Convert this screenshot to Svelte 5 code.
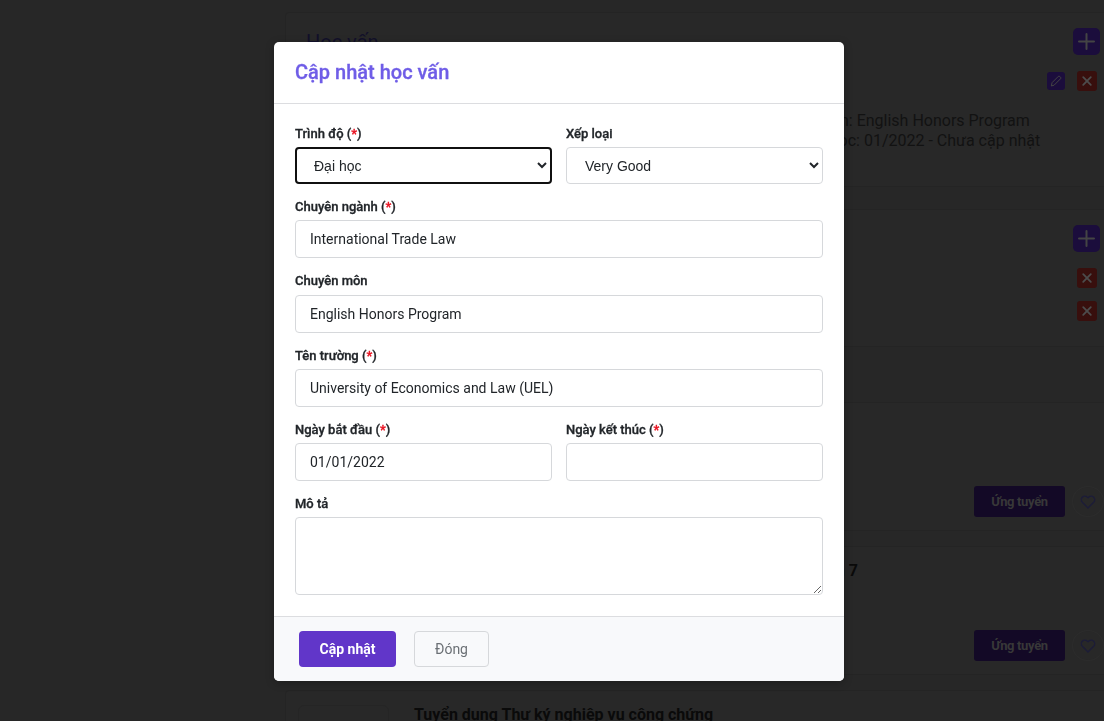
<script lang="ts">
	const ratings = ['Very Good', 'Good', 'Average'];
	const levels = ['Đại học', 'Cao đẳng', 'Thạc sĩ'];
	const jobs = [
		{ title: '', apply: true },
		{ title: 'Tuyển dụng Chuyên viên Pháp chế làm việc tại khu vực Quận 7', apply: true }
	];
</script>

{#snippet plus()}
	<button class="plus" aria-label="Thêm">
		<svg viewBox="0 0 27 27" width="27" height="27"><path d="M13.5 6v15M6 13.5h15" /></svg>
	</button>
{/snippet}

{#snippet remove()}
	<button class="remove" aria-label="Xóa">
		<svg viewBox="0 0 20 20" width="20" height="20"><path d="M6.2 6.2l7.6 7.6M13.8 6.2l-7.6 7.6" /></svg>
	</button>
{/snippet}

{#snippet heart()}
	<button class="heart" aria-label="Yêu thích">
		<svg viewBox="0 0 24 24" width="16" height="16">
			<path d="M12 21 3.5 12.4a5.4 5.4 0 0 1 0-7.6 5.3 5.3 0 0 1 7.5 0l1 1 1-1a5.3 5.3 0 0 1 7.5 0 5.4 5.4 0 0 1 0 7.6z" />
		</svg>
	</button>
{/snippet}

<div class="page">
	<section class="card edu">
		<header class="card-head">
			<h2>Học vấn</h2>
			{@render plus()}
		</header>
		<div class="row-actions">
			<button class="edit" aria-label="Sửa">
				<svg viewBox="0 0 18 18" width="18" height="18">
					<path d="M4.4 13.6l.7-3 6.2-6.2a1 1 0 0 1 1.4 0l.9.9a1 1 0 0 1 0 1.4l-6.2 6.2z" />
				</svg>
			</button>
			{@render remove()}
		</div>
		<div class="edu-info">
			<p>Chuyên môn: English Honors Program</p>
			<p>Thời gian học: 01/2022 - Chưa cập nhật</p>
		</div>
	</section>

	<section class="card skills">
		<header class="card-head">
			<h2>Kỹ năng</h2>
			{@render plus()}
		</header>
		<div class="skill-row">{@render remove()}</div>
		<div class="skill-row">{@render remove()}</div>
	</section>

	<div class="spacer"></div>

	{#each jobs as job}
		<article class="card job">
			<h3>{job.title}</h3>
			<div class="job-actions">
				<button class="apply">Ứng tuyển</button>
				{@render heart()}
			</div>
		</article>
	{/each}

	<article class="card job last">
		<div class="logo"></div>
		<h3>Tuyển dụng Thư ký nghiệp vụ công chứng</h3>
	</article>
</div>

<div class="modal" role="dialog" aria-modal="true">
	<header class="modal-head">
		<h1>Cập nhật học vấn</h1>
	</header>

	<form class="modal-body">
		<div class="cols">
			<div class="field">
				<label for="level">Trình độ (<span class="req">*</span>)</label>
				<select id="level" class="control picker focused">
					{#each levels as level}<option>{level}</option>{/each}
				</select>
			</div>
			<div class="field">
				<label for="rating">Xếp loại</label>
				<select id="rating" class="control picker">
					{#each ratings as rating}<option>{rating}</option>{/each}
				</select>
			</div>
		</div>
		<div class="field">
			<label for="major">Chuyên ngành (<span class="req">*</span>)</label>
			<input id="major" class="control" value="International Trade Law" />
		</div>
		<div class="field">
			<label for="spec">Chuyên môn</label>
			<input id="spec" class="control" value="English Honors Program" />
		</div>
		<div class="field">
			<label for="school">Tên trường (<span class="req">*</span>)</label>
			<input id="school" class="control" value="University of Economics and Law (UEL)" />
		</div>
		<div class="cols">
			<div class="field">
				<label for="start">Ngày bắt đầu (<span class="req">*</span>)</label>
				<input id="start" class="control" value="01/01/2022" />
			</div>
			<div class="field">
				<label for="end">Ngày kết thúc (<span class="req">*</span>)</label>
				<input id="end" class="control" />
			</div>
		</div>
		<div class="field desc">
			<label for="desc">Mô tả</label>
			<textarea id="desc" class="control"></textarea>
		</div>
	</form>

	<footer class="modal-foot">
		<button class="btn primary">Cập nhật</button>
		<button class="btn ghost">Đóng</button>
	</footer>
</div>

<style>
	:global(body) {
		background: #272727;
		overflow: hidden;
		font-family: Roboto, 'Liberation Sans', sans-serif;
	}

	.page {
		height: 721px;
		overflow: hidden;
		padding: 12px 0 0 285px;
		box-sizing: border-box;
		display: flex;
		flex-direction: column;
	}

	.card {
		width: 830px;
		box-sizing: border-box;
		flex-shrink: 0;
		background: #282828;
		border: 1px solid #242424;
		border-radius: 4px;
		position: relative;
		padding: 15px 14px 0 20px;
	}

	.edu {
		height: 175px;
	}

	.skills {
		height: 138px;
		margin-top: 22px;
	}

	.spacer {
		height: 55px;
		flex-shrink: 0;
	}

	.job {
		height: 129px;
		margin-bottom: 15px;
		padding: 14px 0 0 128px;
	}

	.job:not(.last) h3 {
		text-indent: -4px;
	}

	.card-head {
		display: flex;
		justify-content: space-between;
		align-items: flex-start;
	}

	h2 {
		margin: 2px 0 0;
		font-size: 20px;
		font-weight: 400;
		color: #12102a;
		line-height: 24px;
	}

	button {
		border: 0;
		padding: 0;
		display: block;
		font-family: inherit;
	}

	svg path {
		fill: none;
		stroke-linecap: round;
		stroke-linejoin: round;
	}

	.plus {
		width: 27px;
		height: 27px;
		border-radius: 5px;
		background: #1b0d3c;
	}

	.plus path {
		stroke: #444;
		stroke-width: 2;
	}

	.row-actions {
		display: flex;
		justify-content: flex-end;
		align-items: center;
		gap: 12px;
		margin: 16px 3px 0 0;
	}

	.edit {
		width: 18px;
		height: 18px;
		border-radius: 3px;
		background: #1b0d3c;
	}

	.edit path {
		stroke: #444;
		stroke-width: 1;
	}

	.remove {
		width: 20px;
		height: 20px;
		border-radius: 3px;
		background: #380f0d;
	}

	.remove path {
		stroke: #4c4c4c;
		stroke-width: 1.8;
	}

	.edu-info {
		margin: 20px 0 0 454px;
	}

	.edu-info p {
		margin: 0;
		font-size: 16px;
		line-height: 20px;
		color: #121212;
		white-space: nowrap;
	}

	.skill-row {
		display: flex;
		justify-content: flex-end;
		margin: 16px 3px 0 0;
	}

	.skill-row + .skill-row {
		margin-top: 13px;
	}

	h3 {
		margin: 0;
		font-size: 16px;
		font-weight: 700;
		line-height: 20px;
		color: #0a0a0a;
		white-space: nowrap;
	}

	.job-actions {
		position: absolute;
		top: 83px;
		left: 688px;
		display: flex;
		align-items: center;
		gap: 7px;
	}

	.apply {
		width: 91px;
		height: 31px;
		border-radius: 3px;
		background: #130926;
		color: #383838;
		font-size: 13px;
		font-weight: 700;
		letter-spacing: -0.35px;
	}

	.heart {
		width: 32px;
		height: 31px;
		border-radius: 50%;
		border: 1px solid #2c2c2c;
		background: transparent;
		display: flex;
		align-items: center;
		justify-content: center;
		box-sizing: border-box;
	}

	.heart path {
		stroke: #1c1c38;
		stroke-width: 2;
	}

	.logo {
		position: absolute;
		left: 12px;
		top: 14px;
		width: 89px;
		height: 100px;
		border: 1px solid #252525;
		border-radius: 6px;
	}

	.modal {
		position: fixed;
		left: 274px;
		top: 42px;
		width: 570px;
		height: 639px;
		background: #fff;
		border-radius: 5px;
		box-shadow: 0 2px 8px rgba(0, 0, 0, 0.25);
		display: flex;
		flex-direction: column;
		overflow: hidden;
	}

	.modal-head {
		height: 62px;
		flex-shrink: 0;
		box-sizing: border-box;
		border-bottom: 1px solid #dcdde0;
		padding: 0 21px 2px;
		display: flex;
		align-items: center;
	}

	h1 {
		margin: 0;
		font-size: 20px;
		font-weight: 500;
		color: #6f5de7;
		-webkit-text-stroke: 0.3px #6f5de7;
	}

	.modal-body {
		flex: 1;
		padding: 20px 21px 0;
	}

	.cols {
		display: grid;
		grid-template-columns: 257px 257px;
		gap: 14px;
	}

	.field {
		margin-bottom: 12px;
	}

	label {
		display: block;
		font-size: 13px;
		font-weight: 500;
		line-height: 21px;
		margin-bottom: 3.2px;
		color: #212529;
		-webkit-text-stroke: 0.3px #212529;
	}

	.cols:first-child label {
		margin: -1px 0 3.2px;
	}

	.req {
		color: #e8101f;
		-webkit-text-stroke: 0.3px #e8101f;
	}

	.control {
		display: block;
		width: 100%;
		height: 38px;
		box-sizing: border-box;
		border: 1px solid #d6d8db;
		border-radius: 4px;
		padding: 0 14px;
		font-family: Roboto, 'Liberation Sans', sans-serif;
		font-size: 14px;
		color: #212529;
		background: #fff;
		outline: none;
	}

	.picker {
		height: 37px;
		font-family: 'Liberation Sans', sans-serif;
	}

	.focused {
		border: 2px solid #101010;
		padding-left: 13px;
	}

	textarea.control {
		height: 78px;
		padding: 8px 14px;
	}

	.modal-foot {
		height: 65px;
		flex-shrink: 0;
		box-sizing: border-box;
		border-top: 1px solid #dcdde0;
		background: #f8f9fb;
		padding: 14px 25px 0;
		display: flex;
		gap: 18px;
		align-items: flex-start;
	}

	.btn {
		height: 36px;
		border-radius: 4px;
		font-size: 14px;
	}

	.primary {
		width: 97px;
		background: #6136c9;
		color: #fff;
		font-weight: 700;
	}

	.ghost {
		width: 75px;
		background: transparent;
		border: 1px solid #d6d8db;
		color: #6b7075;
	}
</style>
